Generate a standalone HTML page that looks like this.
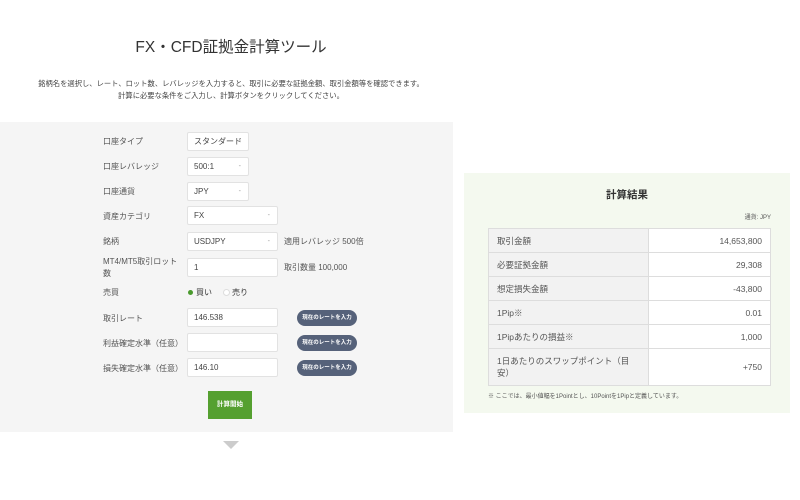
<!DOCTYPE html>
<html><head><meta charset="utf-8"><style>
*{margin:0;padding:0;box-sizing:border-box}
body{width:800px;height:500px;background:#fff;font-family:"Liberation Sans","Noto Sans CJK JP",sans-serif;color:#333;position:relative;overflow:hidden}
.a{position:absolute}
.t{left:0;width:462px;text-align:center}
.lbl{position:absolute;left:103px;font-size:8px;color:#555}
.in{position:absolute;left:187px;height:19px;background:#fff;border:1px solid #e2e2e2;border-radius:2px;font-size:8px;padding-left:6px;line-height:17px;color:#444}
.in.s:after{content:"-";position:absolute;right:7px;top:0;color:#999;font-size:7px}
.btn{position:absolute;left:297px;width:60px;height:16px;background:#56627a;border-radius:8px;color:#fff;font-size:5.5px;font-weight:bold;text-align:center;line-height:16px}
.note{position:absolute;left:284px;font-size:8px;color:#555}
table{position:absolute;left:488px;top:228px;width:283px;border-collapse:collapse;font-size:8.5px;color:#555}
td{border:1px solid #ddd;height:24px;padding:0 8px}
td:first-child{background:#f2f2f2;width:160px}
td:last-child{text-align:right;background:#fff}
</style></head><body>
<div class="a t" style="top:35px;font-size:15.5px;color:#333">FX・CFD証拠金計算ツール</div>
<div class="a t" style="top:78px;font-size:7.3px;line-height:12px;color:#444">銘柄名を選択し、レート、ロット数、レバレッジを入力すると、取引に必要な証拠金額、取引金額等を確認できます。<br>計算に必要な条件をご入力し、計算ボタンをクリックしてください。</div>
<div class="a" style="left:0;top:122px;width:453px;height:310px;background:#f5f5f5"></div>
<div class="lbl" style="top:136px">口座タイプ</div><div class="in s" style="top:132px;width:62px">スタンダード</div>
<div class="lbl" style="top:161px">口座レバレッジ</div><div class="in s" style="top:157px;width:62px">500:1</div>
<div class="lbl" style="top:186px">口座通貨</div><div class="in s" style="top:182px;width:62px">JPY</div>
<div class="lbl" style="top:211px">資産カテゴリ</div><div class="in s" style="top:206px;width:91px">FX</div>
<div class="lbl" style="top:236px">銘柄</div><div class="in s" style="top:232px;width:91px">USDJPY</div><div class="note" style="top:236px">適用レバレッジ 500倍</div>
<div class="lbl" style="top:256px;line-height:12px">MT4/MT5取引ロット<br>数</div><div class="in" style="top:258px;width:91px">1</div><div class="note" style="top:262px">取引数量 100,000</div>
<div class="lbl" style="top:287px">売買</div>
<div class="a" style="left:188px;top:290px;width:5px;height:5px;border-radius:50%;background:#4a9a2e"></div>
<div class="a" style="left:196px;top:287px;font-size:8px">買い</div>
<div class="a" style="left:223px;top:289px;width:7px;height:7px;border-radius:50%;border:1px solid #ddd;background:#fff"></div>
<div class="a" style="left:232px;top:287px;font-size:8px">売り</div>
<div class="lbl" style="top:313px">取引レート</div><div class="in" style="top:308px;width:91px">146.538</div><div class="btn" style="top:310px">現在のレートを入力</div>
<div class="lbl" style="top:338px">利益確定水準（任意）</div><div class="in" style="top:333px;width:91px"></div><div class="btn" style="top:335px">現在のレートを入力</div>
<div class="lbl" style="top:363px">損失確定水準（任意）</div><div class="in" style="top:358px;width:91px">146.10</div><div class="btn" style="top:360px">現在のレートを入力</div>
<div class="a" style="left:208px;top:391px;width:44px;height:28px;background:#55a030;color:#fff;font-size:6.5px;font-weight:bold;text-align:center;line-height:28px">計算開始</div>
<div class="a" style="left:223px;top:441px;width:0;height:0;border-left:8px solid transparent;border-right:8px solid transparent;border-top:8px solid #ccc"></div>
<div class="a" style="left:464px;top:173px;width:326px;height:240px;background:#f4f9ef"></div>
<div class="a" style="left:464px;top:187px;width:326px;text-align:center;font-size:10.5px;font-weight:bold;color:#333">計算結果</div>
<div class="a" style="left:700px;top:212px;width:71px;text-align:right;font-size:6px;color:#555">通貨: JPY</div>
<table>
<tr><td>取引金額</td><td>14,653,800</td></tr>
<tr><td>必要証拠金額</td><td>29,308</td></tr>
<tr><td>想定損失金額</td><td>-43,800</td></tr>
<tr><td>1Pip※</td><td>0.01</td></tr>
<tr><td>1Pipあたりの損益※</td><td>1,000</td></tr>
<tr><td style="height:37px;line-height:12px">1日あたりのスワップポイント（目安）</td><td>+750</td></tr>
</table>
<div class="a" style="left:488px;top:391px;font-size:6px;color:#555">※ ここでは、最小値幅を1Pointとし、10Pointを1Pipと定義しています。</div>
</body></html>
